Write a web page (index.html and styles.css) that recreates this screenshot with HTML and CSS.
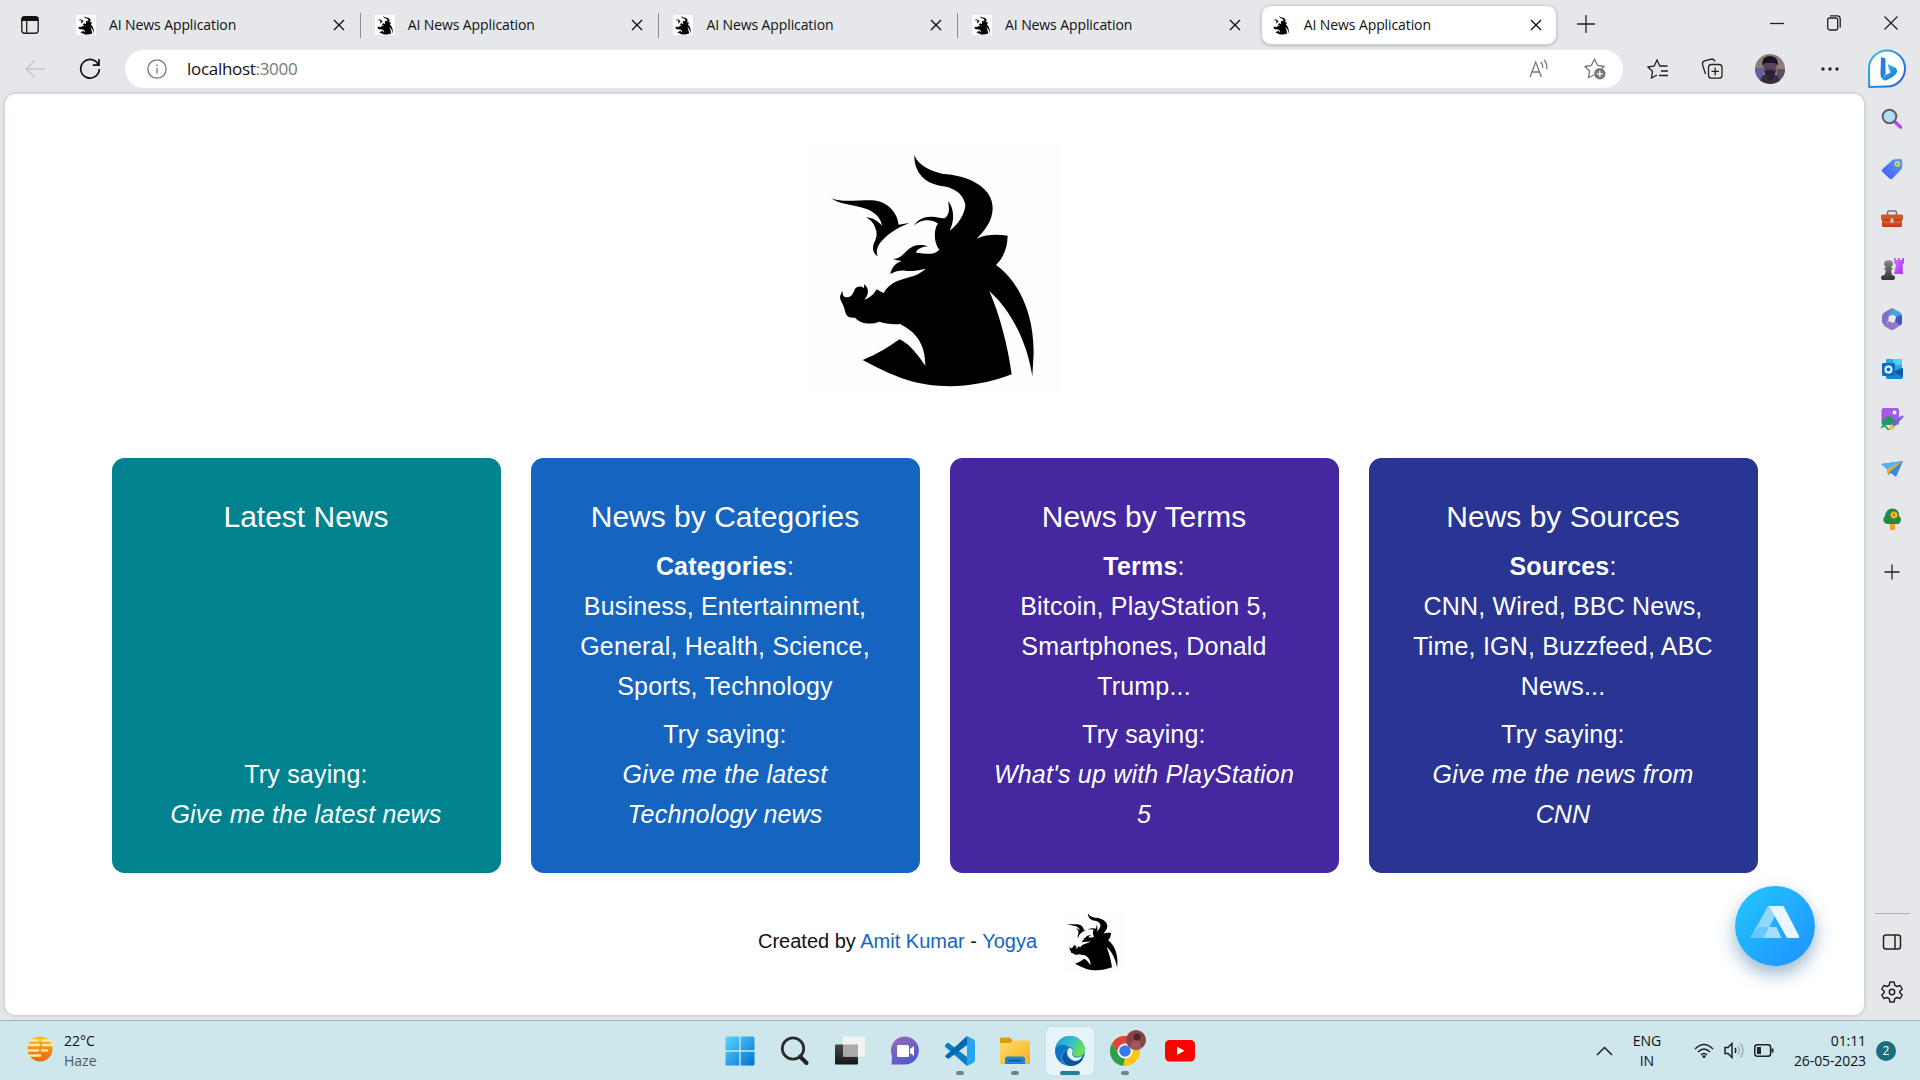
FILE: index.html
```html
<!DOCTYPE html>
<html lang="en">
<head>
<meta charset="utf-8">
<title>AI News Application</title>
<link rel="stylesheet" href="styles.css">
</head>
<body>
<svg class="defs" aria-hidden="true">
  <defs>
    <symbol id="bull" viewBox="0 10 750 750">
      <path d="M0 10H750V760H0Z" fill="#fdfdfd"/>
      <path d="M313 45C322 78 375 100 410 104C490 112 548 150 548 205C548 245 522 275 500 297C530 283 565 284 593 288C592 325 580 355 558 376C620 420 671 510 671 640L667 710C650 600 600 510 538 454C575 540 597 640 605 704C480 752 370 745 290 720C240 705 195 680 158 661C200 645 235 622 269 599C305 617 325 650 346 678C346 610 315 575 270 553C245 555 225 552 208 546C185 555 155 555 135 534C110 535 108 525 104 510C100 490 85 480 92 465Q94 458 99 454C96 465 100 474 112 473C128 470 130 458 135 447C142 440 155 437 162 446L163 433C180 450 175 465 163 480C180 475 190 465 200 449Q210 455 221 460C240 425 275 420 300 412C325 405 338 395 348 387C320 393 300 396 285 393C270 392 255 395 241 403C245 385 255 370 275 364Q260 362 249 358C285 355 285 325 320 317Q337 314 354 320C335 321 320 330 318 339C345 340 370 350 388 330C375 315 372 290 376 270Q378 258 384 252C370 240 335 235 311 259C325 235 350 228 375 232Q395 236 404 236C420 225 418 205 414 184C432 205 435 240 419 273C450 250 466 215 466 195C460 165 435 145 400 140C345 132 312 100 313 45Z"/>
      <path d="M63 176C95 188 130 182 185 182C235 185 262 220 266 255Q285 252 298 250C260 265 230 285 210 310C200 325 198 335 203 350C188 340 186 325 192 310C200 295 203 280 196 265C192 250 180 240 168 232C185 235 200 240 216 258C213 235 195 218 170 208C130 195 90 195 63 176Z"/>
    </symbol>
    <linearGradient id="gBlue" x1="0" y1="0" x2="1" y2="1"><stop offset="0" stop-color="#4fd0ff"/><stop offset="1" stop-color="#0568c9"/></linearGradient>
    <linearGradient id="gBing" x1="0" y1="0" x2="1" y2="1"><stop offset="0" stop-color="#30c3ea"/><stop offset="1" stop-color="#2356d8"/></linearGradient>
    <linearGradient id="gTag" x1="1" y1="0" x2="0" y2="1"><stop offset="0" stop-color="#54a4f8"/><stop offset="1" stop-color="#4654f5"/></linearGradient>
    <linearGradient id="gDark" x1="0" y1="0" x2="0" y2="1"><stop offset="0" stop-color="#888"/><stop offset="1" stop-color="#333"/></linearGradient>
    <linearGradient id="gPink" x1="0" y1="0" x2="1" y2="1"><stop offset="0" stop-color="#d67afc"/><stop offset="1" stop-color="#a42bf7"/></linearGradient>
    <linearGradient id="gRed" x1="0" y1="0" x2="0" y2="1"><stop offset="0" stop-color="#ea6334"/><stop offset="1" stop-color="#bb3816"/></linearGradient>
    <linearGradient id="gWin" x1="0" y1="0" x2="1" y2="1"><stop offset="0" stop-color="#57d6ff"/><stop offset="1" stop-color="#0070d1"/></linearGradient>
    <linearGradient id="gTask" x1="0" y1="0" x2="0" y2="1"><stop offset="0" stop-color="#474747"/><stop offset="1" stop-color="#171717"/></linearGradient>
    <linearGradient id="gChat" x1="0" y1="0" x2=".5" y2="1"><stop offset="0" stop-color="#9a6bb4"/><stop offset="1" stop-color="#5558cb"/></linearGradient>
    <linearGradient id="gFolder" x1="0" y1="0" x2="1" y2="1"><stop offset="0" stop-color="#ffdc6d"/><stop offset="1" stop-color="#f8b01b"/></linearGradient>
    <linearGradient id="gEdge" x1="0" y1="0" x2="1" y2=".4"><stop offset="0" stop-color="#2295dc"/><stop offset=".55" stop-color="#31bfcf"/><stop offset="1" stop-color="#6ce051"/></linearGradient>
    <linearGradient id="gSun" x1="0" y1="0" x2="0" y2="1"><stop offset="0" stop-color="#f9bf10"/><stop offset="1" stop-color="#ec620f"/></linearGradient>
  </defs>
</svg>

<header class="tabstrip">
  <svg class="tab-actions" width="20" height="20" viewBox="0 0 20 20"><rect x="1.8" y="1.8" width="16.4" height="16.4" rx="3" fill="none" stroke="#222" stroke-width="1.4"/><path d="M1.5 6V4Q1.5 1.2 4.5 1.2H15.5Q18.5 1.2 18.5 4V6Z" fill="#111"/><path d="M6.7 6V18" stroke="#222" stroke-width="1.3"/></svg>
  <nav class="tabs">
    <div class="tab"><svg class="favicon"><use href="#bull"/></svg><span>AI News Application</span><svg class="close" viewBox="0 0 12 12"><path d="M1 1L11 11M11 1L1 11"/></svg></div>
    <div class="tab"><svg class="favicon"><use href="#bull"/></svg><span>AI News Application</span><svg class="close" viewBox="0 0 12 12"><path d="M1 1L11 11M11 1L1 11"/></svg></div>
    <div class="tab"><svg class="favicon"><use href="#bull"/></svg><span>AI News Application</span><svg class="close" viewBox="0 0 12 12"><path d="M1 1L11 11M11 1L1 11"/></svg></div>
    <div class="tab no-line"><svg class="favicon"><use href="#bull"/></svg><span>AI News Application</span><svg class="close" viewBox="0 0 12 12"><path d="M1 1L11 11M11 1L1 11"/></svg></div>
    <div class="tab active"><svg class="favicon"><use href="#bull"/></svg><span>AI News Application</span><svg class="close" viewBox="0 0 12 12"><path d="M1 1L11 11M11 1L1 11"/></svg></div>
  </nav>
  <svg class="line-icon new-tab" width="18" height="18" viewBox="0 0 18 18"><path d="M9 0V18M0 9H18"/></svg>
  <div class="window-buttons">
    <svg class="line-icon" width="14" height="14" viewBox="0 0 14 14"><path d="M0 7.5H14"/></svg>
    <svg class="line-icon" width="14" height="16" viewBox="0 0 14 16"><rect x=".7" y="3" width="10" height="12" rx="2"/><path d="M3 .8H10.500Q13.200 .8 13.200 4V12.500"/></svg>
    <svg class="line-icon" width="14" height="16" viewBox="0 0 14 16"><path d="M.5 1.500L13.500 14.500M13.500 1.500L.5 14.500"/></svg>
  </div>
</header>

<div class="toolbar">
  <svg class="line-icon back" width="20" height="18" viewBox="0 0 20 18"><path d="M20 9H1M10 .5L1 9L10 17.500"/></svg>
  <svg class="line-icon reload" width="22" height="22" viewBox="0 0 22 22"><path d="M19.500 7A9.300 9.300 0 1 0 20.300 11M20 1V7.200H13.800"/></svg>
  <div class="omnibox">
    <svg class="info" width="20" height="20" viewBox="0 0 20 20"><circle cx="10" cy="10" r="9.200"/><path d="M10 9V14.500M10 5.500V7"/></svg>
    <span class="url">localhost<i>:3000</i></span>
    <svg class="grey-icon read" width="20" height="20" viewBox="0 0 20 20"><path d="M1 18L6.700 3L12.400 18M3 13H10.500M11.500 3Q14 5 13.600 9M15 1Q18.500 4.500 17.700 10"/></svg>
    <svg class="grey-icon" width="22" height="22" viewBox="0 0 22 22"><path d="M10 17L4.500 19.500L5.500 13L1 8.500L7.300 7.500L10.500 1.200L13.700 7.500L20 8.500L18 10.500"/><circle cx="15.800" cy="15.800" r="5.700" fill="#777" stroke="none"/><path d="M15.800 12.800V18.800M12.800 15.800H18.800" stroke="#fff"/></svg>
  </div>
  <div class="tools">
    <svg class="line-icon" width="22" height="20" viewBox="0 0 22 20"><path d="M10 16L4.500 19L5.500 12.500L1 8L7.300 7L10 1L12.800 7H20.500M14 12H21M12 16.500H21"/></svg>
    <svg class="line-icon" width="22" height="22" viewBox="0 0 22 22"><rect x="7.500" y="6.500" width="13.500" height="13.700" rx="3"/><path d="M14.200 9.500V17.200M10.500 13.300H18M4.500 16L1.500 6.500Q.8 3.800 3.500 2.800L11 1Q13 .8 14 3.500"/></svg>
    <svg class="avatar" width="30" height="30" viewBox="0 0 30 30"><clipPath id="face"><circle cx="15" cy="15" r="15"/></clipPath><g clip-path="url(#face)"><path d="M0 0H30V30H0Z" fill="#8d7d74"/><path d="M0 14H8V30H0Z" fill="#6160a5"/><path d="M22 15H30V30H22Z" fill="#5c4e6b"/><path d="M3 30L8 21H22L27 30Z" fill="#392c3b"/><ellipse cx="15" cy="14" rx="6.500" ry="9.500" fill="#5a435d"/><path d="M7.500 12Q6 2 15 2T22.500 12L20 9H10Z" fill="#171521"/><path d="M9.500 17Q15 14 20.500 17L18 25Q15 28 12 25Z" fill="#29203a"/></g></svg>
    <svg class="dots" width="18" height="4" viewBox="0 0 18 4"><circle cx="2" cy="2" r="1.700"/><circle cx="9" cy="2" r="1.700"/><circle cx="16" cy="2" r="1.700"/></svg>
    <svg class="bing" width="40" height="40" viewBox="0 0 40 40"><path d="M2.200 38L2 19.500A18 18 0 1 1 20 37.500Z" fill="#fff" stroke="url(#gBing)" stroke-width="2"/><path d="M14 8L18.500 9.500V25L15 29Q13.500 28 13.500 25Z" fill="#2b7ae8"/><path d="M20.500 15L28 18.500Q31 20 29.500 24Q28 27 20 31Q16 32.500 14 28L23.500 23.500L22 20Z" fill="url(#gBlue)"/></svg>
  </div>
</div>

<div class="workspace">
  <main class="page">
    <svg class="logo"><use href="#bull"/></svg>
    <section class="cards">
      <article class="card teal">
        <h2>Latest News</h2>
        <p>Try saying:<br><em>Give me the latest news</em></p>
      </article>
      <article class="card blue">
        <h2>News by Categories</h2>
        <p><b>Categories</b>:<br>Business, Entertainment, General, Health, Science, Sports, Technology</p>
        <p>Try saying:<br><em>Give me the latest Technology news</em></p>
      </article>
      <article class="card purple">
        <h2>News by Terms</h2>
        <p><b>Terms</b>:<br>Bitcoin, PlayStation 5, Smartphones, Donald Trump...</p>
        <p>Try saying:<br><em>What's up with PlayStation 5</em></p>
      </article>
      <article class="card indigo">
        <h2>News by Sources</h2>
        <p><b>Sources</b>:<br>CNN, Wired, BBC News, Time, IGN, Buzzfeed, ABC News...</p>
        <p>Try saying:<br><em>Give me the news from CNN</em></p>
      </article>
    </section>
    <footer class="credit">
      <span>Created by <a>Amit Kumar</a> - <a>Yogya</a></span>
      <svg class="logo-small"><use href="#bull"/></svg>
    </footer>
    <button class="assistant" aria-label="Assistant">
      <svg width="48" height="33" viewBox="0 0 48 33"><path d="M17 0H22L25 8L12.500 32H1Q-.5 32 .3 30Z" fill="#91d8ff"/><path d="M7 21H18L12.500 32H1Q-.5 32 .3 30Z" fill="#65c8ff"/><path d="M18 21H25.500L30.500 32H12.500Z" fill="#a5dcff"/><path d="M18 0H31.500Q32.500 0 33 1L48 30Q48.500 32 47 32H37Q36 32 35.500 31Z" fill="#ebf7ff"/></svg>
    </button>
  </main>
  <aside class="sidebar">
    <svg viewBox="0 0 24 24"><path d="M14.500 14.500L20.500 20" stroke="#c044ee" stroke-width="3.600" stroke-linecap="round"/><circle cx="9.500" cy="9.500" r="6.800" fill="#b5dcf5" stroke="#606060" stroke-width="2"/></svg>
    <svg viewBox="0 0 24 24"><path d="M13 2.500L20.500 2Q22.500 2 22.300 4L22 11.500L12.500 21.500Q11 22.800 9.500 21.500L2.500 15Q1 13.500 2.500 12Z" fill="url(#gTag)"/><circle cx="17.300" cy="7" r="2" fill="#7b94ca" stroke="#ffd43e" stroke-width="1.500"/></svg>
    <svg viewBox="0 0 24 24"><path d="M7.500 8V5.500Q7.500 4 9 4H15Q16.500 4 16.500 5.500V8" fill="none" stroke="#777" stroke-width="1.600"/><rect x="1" y="7.500" width="22" height="5.500" rx="1.300" fill="#d4582b"/><path d="M2 13H22V18.500Q22 20 20.500 20H3.500Q2 20 2 18.500Z" fill="url(#gRed)"/><path d="M2 13H22" stroke="#96311b"/><rect x="10.500" y="11.500" width="3" height="4.500" rx="1" fill="#ccc"/></svg>
    <svg viewBox="0 0 24 24"><path d="M14 1H16V3H18V1H20V3H22V1H24V6L22.500 8L23 17H14L16 8L14 6Z" fill="url(#gPink)"/><path d="M8.500 3.500A3.500 3.500 0 0 1 11 10L13 12L11 13L12 18Q15 18 15 21Q15 23 13 23H3Q1 23 1 21Q1 18 4.500 18L6 13L3.500 12L6 10A3.500 3.500 0 0 1 8.500 3.500Z" fill="url(#gDark)"/></svg>
    <svg viewBox="0 0 24 24"><path d="M12 1L5 5Q2 6.500 2 10V14Q2 17 5 18L8.500 13V9.500L15.500 5.500Z" fill="#7c70c8"/><path d="M12 1L20 5.200Q22 6.500 22 9V15L16 13V9.500L12 7.500L8 9.500Z" fill="#4c9edc"/><path d="M22 10V15Q22 17 20 18.500L14 22.500Q12 23.500 10 22.500L3.500 18.500L9 14L12 16L16 14Z" fill="#9277c9"/><path d="M22 8V15Q22 17 20 18.500L15 14L16 10Z" fill="#4255bd"/></svg>
    <svg viewBox="0 0 24 24"><path d="M7 2H21Q22 2 22 3V13H6V3Q6 2 7 2Z" fill="#28a8ea"/><path d="M13 2H22V8H13Z" fill="#50d0fa"/><path d="M6 15L23 11V20Q23 22 21 22H8Q6 22 6 20Z" fill="#1685d5"/><path d="M13 15L23 11V20Z" fill="#135aa0"/><rect x="2" y="6" width="13" height="13" rx="1.300" fill="#0b6fc2"/><circle cx="8.500" cy="12.500" r="3" fill="none" stroke="#fff" stroke-width="1.900"/></svg>
    <svg viewBox="0 0 24 24"><rect x="1.500" y="1" width="17.500" height="17" rx="2.500" fill="#a45bea"/><circle cx="14.500" cy="5.500" r="2" fill="#fff"/><path d="M2 17V13L9 8.500L17 15L16 18H3Z" fill="#229769"/><path d="M1.500 21Q4 17 6 20T10 22" fill="none" stroke="#24a07e" stroke-width="1.800"/><path d="M23.500 10L14 20L11.500 17.500L21 9Q24 7.500 23.500 10Z" fill="#6865e2"/><path d="M11.500 17L15 20Q13 24 8 22Q10 21 11.500 17Z" fill="#f4bd31"/></svg>
    <svg viewBox="0 0 24 24"><path d="M1 7L23 4L16 20L11 16L8 18L7 12Z" fill="#2e8ce4"/><path d="M1 7L23 4L8 12Z" fill="#4db5fa"/><path d="M7 12L23 4L10 14.500L8 18Z" fill="#f5a91d"/></svg>
    <svg viewBox="0 0 24 24"><rect x="10" y="16" width="5" height="7" rx="1" fill="#efa02c"/><path d="M7 17A4.500 4.500 0 0 1 5 9Q6 1.500 12.500 1.500T19 9A4.500 4.500 0 0 1 18 17Z" fill="#258942"/><path d="M14 4L15.500 5.500H17V7L18 8L17 9V10.500H15.500L14 12L12.500 10.500H11V9L10 8L11 7V5.500H12.500Z" fill="#f8bb2d"/><circle cx="14" cy="8" r="1.200" fill="#d95c1a"/></svg>
    <svg class="line-icon add" viewBox="0 0 24 24"><path d="M12 4.500V19.500M4.500 12H19.500"/></svg>
    <hr>
    <svg class="line-icon strong" viewBox="0 0 24 24"><rect x="3.500" y="5" width="17" height="14" rx="2.500"/><path d="M15 5V19"/></svg>
    <svg class="line-icon strong" viewBox="0 0 24 24"><path d="M10 2H14L14.800 5.300L17 6.500L20.200 5.500L22.200 9L19.800 11.300V12.700L22.200 15L20.200 18.500L17 17.500L14.800 18.700L14 22H10L9.200 18.700L7 17.500L3.800 18.500L1.800 15L4.200 12.700V11.300L1.800 9L3.800 5.500L7 6.500L9.200 5.300Z" stroke-linejoin="round"/><circle cx="12" cy="12" r="2.700"/></svg>
  </aside>
</div>

<footer class="taskbar">
  <div class="weather">
    <svg width="30" height="28" viewBox="0 0 30 28"><circle cx="15" cy="14" r="12.500" fill="url(#gSun)"/><path d="M6 5.500H13M17 5.500H29M4 10H14M18 10H28M1 15.500H13M17 15.500H22M1 20.500H15" stroke="#f5e5af" stroke-width="2.600" stroke-linecap="round"/></svg>
    <div>22°C<br><span>Haze</span></div>
  </div>
  <div class="apps">
    <div class="app"><svg viewBox="0 0 30 30"><path d="M2 .5H14.300V14.300H.5V2Q.5 .5 2 .5ZM15.700 .5H28Q29.500 .5 29.500 2V14.300H15.700ZM.5 15.700H14.300V29.500H2Q.5 29.500 .5 28ZM15.700 15.700H29.500V28Q29.500 29.500 28 29.500H15.700Z" fill="url(#gWin)"/></svg></div>
    <div class="app"><svg viewBox="0 0 30 30"><path d="M20 20.500L26.500 27" stroke="#222" stroke-width="4" stroke-linecap="round"/><circle cx="13" cy="12.500" r="10.700" fill="none" stroke="#2c2c2c" stroke-width="2.800"/></svg></div>
    <div class="app"><svg viewBox="0 0 30 30"><rect x="0" y="8.500" width="23" height="20" rx="1" fill="url(#gTask)"/><rect x="8" y=".5" width="22" height="20" rx="1" fill="#f3f3f3"/><path d="M8 8.500H23V20.500H8Z" fill="#aaa"/></svg></div>
    <div class="app"><svg viewBox="0 0 30 30"><path d="M1.500 28.500L2 20A14 14 0 1 1 15 28.500Z" fill="url(#gChat)"/><rect x="7" y="9" width="12" height="12" rx="1.500" fill="#fff"/><path d="M20 13L24 10V20L20 17Z" fill="#fff"/></svg></div>
    <div class="app running"><svg viewBox="0 0 30 30"><path d="M0 9L3 6.500L22 21V30L1 11.500Q-.5 10 0 9Z" fill="#087cc4"/><path d="M0 20L22 0V9L4 22.500Q2.500 23 1 21.500Z" fill="#0668ad"/><path d="M22 0L28 3Q30 4 30 6V24Q30 26 28 27L22 30Z" fill="#24a6ef"/></svg></div>
    <div class="app running"><svg viewBox="0 0 30 30"><path d="M0 3Q0 1.500 1.500 1.500H10L13 5H28V12H0Z" fill="#dc9e08"/><path d="M0 7H10L13 4.500H28.500Q30 4.500 30 6V28H0Z" fill="url(#gFolder)"/><path d="M5 28V23Q5 20.500 7.500 20.500H22.500Q25 20.500 25 23V28Z" fill="#1486d5"/><path d="M9 24.500H21" stroke="#09599d" stroke-width="1.500" stroke-linecap="round"/></svg></div>
    <div class="app running current"><svg viewBox="0 0 30 30"><circle cx="15" cy="15" r="15" fill="#1273c9"/><path d="M.3 12A15 15 0 0 1 30 14C30 20 24 22 19 20Q16 19 18 16Q19 12 14 11Q7 6 .3 12Z" fill="url(#gEdge)"/><path d="M11 13Q6 22 14 26Q21 29 28 22Q24 30 15 30Q6 29 6 21Q7 15 11 13Z" fill="#1d91dc"/><path d="M11 15Q8 24 17 27Q23 28 28 22Q24 30 15 30Q7 27 7.500 21Q8 17 11 15Z" fill="#114e98"/><path d="M13 13Q16 10 18 15Q16 18 18 20Q21 23 27.500 20Q25 25 20 25Q13 23 12 17Z" fill="#e6f3f8"/><path d="M11 15Q11 23 18 25.500Q24 26 28 21.500Q27 26 22 28Q10 29 11 15Z" fill="#114e98"/></svg></div>
    <div class="app running"><svg viewBox="0 0 30 30"><circle cx="15" cy="15" r="15" fill="#fbc519"/><path d="M2 7.500A15 15 0 0 1 28 7.500H15L9 19Z" fill="#e24435"/><path d="M2 7.500L8.500 18.500L15 22L13 29.900A15 15 0 0 1 2 7.500Z" fill="#2aa04f"/><circle cx="15" cy="15" r="7.500" fill="#fff"/><circle cx="15" cy="15" r="5.800" fill="#347be9"/></svg><svg class="profile" viewBox="0 0 20 20"><circle cx="10" cy="10" r="10" fill="#874642"/><path d="M4 17L7 10L13 11L16 18Q10 22 4 17Z" fill="#a65367"/><circle cx="11" cy="7" r="3.500" fill="#49282b"/></svg></div>
    <div class="app"><svg viewBox="0 0 30 30"><rect x="0" y="4" width="30" height="21.500" rx="4.500" fill="#f00"/><path d="M12 10.500V19L19.500 14.700Z" fill="#fff"/></svg></div>
  </div>
  <div class="tray">
    <svg class="line-icon strong" width="17" height="10" viewBox="0 0 17 10"><path d="M1 9L8.500 1.500L16 9"/></svg>
    <div class="lang">ENG<br>IN</div>
    <svg class="line-icon strong wifi" width="20" height="16" viewBox="0 0 20 16"><path d="M1 6Q10-3 19 6M4 9Q10 3 16 9M7 12Q10 9 13 12"/><circle cx="10" cy="13.500" r="1.500" fill="#222" stroke="none"/></svg>
    <svg class="line-icon strong sound" width="20" height="17" viewBox="0 0 20 17"><path d="M1 5.500H4L8 1.500V15.500L4 11.500H1ZM11 6Q12.500 8.500 11 11"/><path d="M14 4Q16.500 8.500 14 13M16.500 1.500Q21.500 8.500 16.500 15.500" stroke="#9eb3b7"/></svg>
    <svg class="line-icon strong battery" width="20" height="13" viewBox="0 0 20 13"><rect x=".8" y=".8" width="15.800" height="11.400" rx="2.500"/><path d="M3 3H7V10H3Z" fill="#222" stroke="none"/><path d="M18.500 4.500V8.500" stroke-width="2"/></svg>
    <div class="clock">01:11<br>26-05-2023</div>
    <span class="badge">2</span>
  </div>
</footer>
</body>
</html>
```
FILE: styles.css
```css
* { box-sizing: border-box; }
body {
  margin: 0;
  width: 1920px;
  height: 1080px;
  overflow: hidden;
  display: flex;
  flex-direction: column;
  background: #e5e7eb;
  color: #111;
  font: 14px/20px "Open Sans", "Noto Sans", sans-serif;
}
svg { display: block; flex: none; }
.defs { position: absolute; width: 0; height: 0; }
.line-icon { fill: none; stroke: #222; stroke-width: 1.3; }
.line-icon.strong { stroke-width: 1.5; }

/* Tab strip */
.tabstrip { display: flex; height: 50px; padding-top: 5px; flex: none; }
.tab-actions { margin: 10px 22px 0 20px; }
.tabs { display: flex; }
.tab {
  display: flex;
  align-items: center;
  width: 298.7px;
  height: 40px;
  padding: 0 16px 0 14px;
  font-size: 14px;
  letter-spacing: -.1px;
  background: linear-gradient(#8b8d91, #8b8d91) right 0 top 8px / 1px 25px no-repeat;
}
.tab.no-line { background: none; }
.tab.active {
  margin-left: 4px;
  width: 296px;
  padding: 0 14px 0 9px;
  border: 1px solid #cfd1d5;
  border-radius: 10px;
  background: #fff;
  box-shadow: 0 1px 3px #b9bbc0;
}
.favicon { width: 20px; height: 20px; margin-right: 13px; }
.close { width: 12px; height: 12px; margin-left: auto; fill: none; stroke: #111; stroke-width: 1.4; }
.new-tab { margin: 10px 0 0 20px; }
.window-buttons { display: flex; align-items: center; gap: 43px; margin: 0 22px 0 auto; height: 36px; }

/* Address bar */
.toolbar { display: flex; align-items: center; height: 38px; flex: none; }
.back { margin: 0 34px 0 25px; stroke: #c5c7ca; }
.reload { margin-right: 24px; stroke: #111; stroke-width: 1.7; }
.omnibox {
  display: flex;
  align-items: center;
  width: 1498px;
  height: 38px;
  padding: 0 17px 0 22px;
  border-radius: 19px;
  background: #fff;
}
.info, .grey-icon { fill: none; stroke: #777; stroke-width: 1.3; }
.url { flex: 1; margin-left: 20px; font-size: 17px; letter-spacing: -.3px; }
.url i { font-style: normal; color: #777; }
.read { margin-right: 35px; }
.tools { display: flex; align-items: center; flex: 1; padding: 0 13px 0 24px; justify-content: space-between; }
.dots { fill: #222; margin: 0 -4px 0 4px; }

/* Browser content and side panel */
.workspace { display: flex; height: 932px; flex: none; }
.page {
  position: relative;
  display: flex;
  flex-direction: column;
  align-items: center;
  width: 1859px;
  height: 921px;
  margin: 6px 0 0 5px;
  padding-top: 49px;
  border-radius: 10px;
  background: #fff;
  box-shadow: 0 0 4px #b9bbc0;
  font-family: "Liberation Sans", Arial, sans-serif;
}
.logo { width: 250px; height: 250px; }
.cards { display: grid; grid-template-columns: repeat(4, 389px); gap: 30px; margin-top: 65px; }
.card {
  display: flex;
  flex-direction: column;
  justify-content: space-between;
  height: 415px;
  padding: 39px;
  border-radius: 12.5px;
  color: #fff;
  text-align: center;
  font-size: 25px;
  line-height: 40px;
  letter-spacing: .1875px;
}
.card h2 { margin: 0; font-size: 30px; font-weight: 400; line-height: 40px; letter-spacing: 0; }
.card p { margin: 0; }
.teal { background: #00838f; }
.blue { background: #1565c0; }
.purple { background: #4527a0; }
.indigo { background: #283593; }
.credit { display: flex; align-items: center; gap: 25px; margin: 37px 0 0 13px; font-size: 20px; }
.credit a { color: #1565c0; }
.logo-small { width: 62px; height: 62px; }
.assistant {
  position: absolute;
  right: 49px;
  bottom: 49px;
  display: grid;
  place-items: center;
  width: 80px;
  height: 80px;
  padding: 0 0 7px;
  border: 0;
  border-radius: 50%;
  background: linear-gradient(135deg, #22c8ff, #1e90ff);
  box-shadow: 0 8px 18px rgba(30, 90, 150, .45);
}
.sidebar { display: flex; flex-direction: column; align-items: center; gap: 26px; width: 56px; padding-top: 19px; }
.sidebar svg { width: 24px; height: 24px; }
.sidebar .add { margin-top: 3px; }
.sidebar hr { width: 35px; margin: auto 0 -10px; border: 0; border-top: 1px solid #aeb0b4; }
.sidebar svg:last-child { margin-bottom: 16px; }

/* Taskbar */
.taskbar {
  display: grid;
  grid-template-columns: 1fr auto 1fr;
  height: 60px;
  padding: 0 24px;
  border-top: 1px solid #a4b3b7;
  background: #cde7ed;
}
.weather { display: flex; align-items: center; gap: 9px; margin-left: 1px; }
.weather span { color: #495c60; }
.weather svg { margin-top: -4px; }
.apps { display: flex; align-items: center; gap: 7px; }
.app {
  position: relative;
  display: grid;
  place-items: center;
  width: 48px;
  height: 48px;
  border-radius: 5px;
}
.app svg { width: 30px; height: 30px; }
.app.running::after {
  content: "";
  position: absolute;
  bottom: 0;
  width: 8px;
  height: 4px;
  border-radius: 2px;
  background: #758385;
}
.app.current { background: #e6f3f8; box-shadow: 0 0 1px #9ab4bb; }
.app.current::after { width: 20px; background: #237f91; }
.app .profile { position: absolute; right: 3px; top: 3px; width: 20px; height: 20px; }
.tray { display: flex; align-items: center; justify-content: flex-end; }
.lang { width: 30px; margin: 0 32px 0 19px; text-align: center; }
.wifi { margin-right: 10px; }
.sound { margin-right: 10px; }
.battery { margin-right: 20px; }
.clock { text-align: right; letter-spacing: -.1px; }
.badge { width: 20px; height: 20px; margin-left: 10px; border-radius: 50%; background: #1a6f7c; color: #fff; text-align: center; font-size: 12px; }
```
